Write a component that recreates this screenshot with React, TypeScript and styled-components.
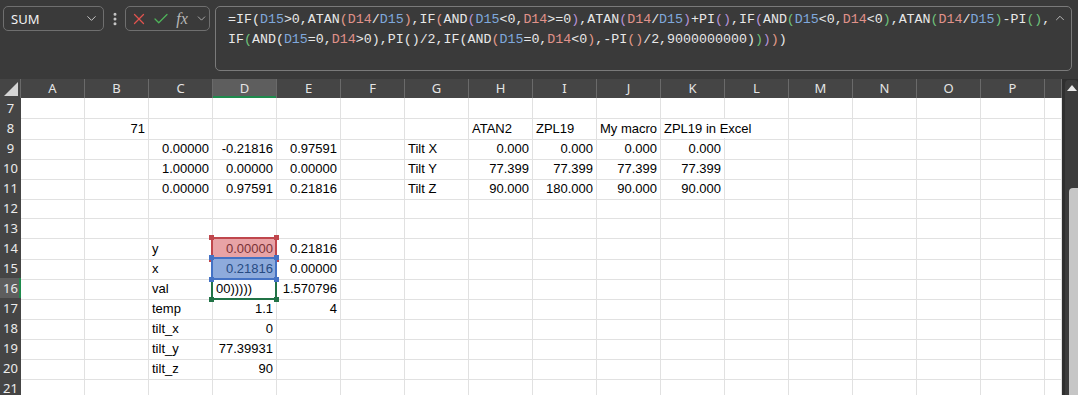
import styled, { createGlobalStyle } from 'styled-components'
import { ChevronDown, ChevronUp, EllipsisVertical, X, Check } from 'lucide-react'
import type { ReactNode } from 'react'

const GlobalStyle = createGlobalStyle`
  html, body {
    margin: 0;
    padding: 0;
    background: #3a3a3a;
    overflow: hidden;
  }
  #root {
    width: 1078px;
    height: 395px;
    overflow: hidden;
  }
`

const Toolbar = styled.div`
  display: flex;
  align-items: flex-start;
  height: 79px;
  box-sizing: border-box;
  padding: 6px 6px 0 3px;
  background: #3a3a3a;
`

const NameBox = styled.div`
  width: 101px;
  height: 25px;
  box-sizing: border-box;
  border: 1px solid #6f6f6f;
  border-radius: 5px;
  display: flex;
  align-items: center;
  justify-content: space-between;
  padding: 0 4px 0 7px;
  color: #f2f2f2;
  font: 13px 'Noto Sans', 'Open Sans', sans-serif;
`

const Dots = styled.div`
  width: 21px;
  height: 25px;
  display: flex;
  align-items: center;
  justify-content: center;
  color: #c8c8c8;
`

const FxBox = styled.div`
  width: 85px;
  height: 25px;
  box-sizing: border-box;
  border: 1px solid #6f6f6f;
  border-radius: 5px;
  display: grid;
  grid-template-columns: 17px 17px 16px 12px;
  column-gap: 5px;
  align-items: center;
  padding-left: 4px;
`

const FxLabel = styled.span`
  font: italic 16px 'Liberation Serif', serif;
  color: #b8b8b8;
  text-align: center;
  line-height: 22px;
`

const FormulaBox = styled.div`
  flex: 1;
  height: 65px;
  margin-left: 5px;
  box-sizing: border-box;
  border: 1px solid #7a7a7a;
  border-radius: 5px;
  display: flex;
  justify-content: space-between;
  padding: 3px 4px 0 12px;
  font: 13.3px 'Liberation Mono', monospace;
  line-height: 20px;
  color: #e8e8e8;
`

const FormulaText = styled.div`
  white-space: pre;
`

const Collapse = styled.div`
  color: #c8c8c8;
  padding-top: 1px;
`

const Sheet = styled.div`
  display: flex;
  height: 316px;
`

const Grid = styled.div`
  width: 1062px;
  background: #ffffff;
  overflow: hidden;
  font: 13px 'Liberation Sans', Arial, sans-serif;
`

const Row = styled.div<{ $h: number }>`
  display: grid;
  grid-template-columns: 21px repeat(16, 64px) 17px;
  height: ${p => p.$h}px;
`

const Corner = styled.div`
  background: #454545;
  border-right: 1px solid #6a6a6a;
  display: flex;
  align-items: flex-end;
  justify-content: flex-end;
  padding: 0 2px 2px 0;
`

const ColHead = styled.div<{ $active?: boolean }>`
  background: ${p => (p.$active ? '#5e5e5e' : '#454545')};
  border-right: 1px solid #6a6a6a;
  box-shadow: ${p => (p.$active ? 'inset 0 -2px 0 #1e8a4c' : 'none')};
  color: #e4e4e4;
  font: 13px 'Noto Sans', 'Open Sans', sans-serif;
  line-height: 19px;
  text-align: center;
`

const RowHead = styled.div<{ $active?: boolean }>`
  background: ${p => (p.$active ? '#5e5e5e' : '#454545')};
  border-bottom: 1px solid #6c6c6c;
  box-shadow: ${p => (p.$active ? 'inset -2px 0 0 #1e8a4c' : 'none')};
  box-sizing: border-box;
  color: #ececec;
  font: 13px 'Noto Sans', 'Open Sans', sans-serif;
  line-height: 20px;
  text-align: center;
`

type Frame = 'red' | 'blue' | 'green'

const frameColors: Record<Frame, { line: string; fill: string; text: string; z: number }> = {
  red: { line: '#c0474d', fill: '#e8a3a6', text: '#7a3236', z: 3 },
  blue: { line: '#4472c4', fill: '#8eabdc', text: '#264a82', z: 3 },
  green: { line: '#217346', fill: 'transparent', text: '#000000', z: 2 },
}

const Cell = styled.div<{ $num?: boolean; $open?: boolean; $frame?: Frame }>`
  position: relative;
  box-sizing: border-box;
  border-right: 1px solid ${p => (p.$open ? 'transparent' : '#e1e1e1')};
  border-bottom: 1px solid #e1e1e1;
  padding: 0 3px;
  line-height: 21px;
  white-space: nowrap;
  text-align: ${p => (p.$num ? 'right' : 'left')};
  color: ${p => (p.$frame ? frameColors[p.$frame].text : '#000000')};
  background: ${p => (p.$frame ? frameColors[p.$frame].fill : 'transparent')};
  z-index: ${p => (p.$frame ? frameColors[p.$frame].z : 'auto')};

  &::after {
    content: '';
    display: ${p => (p.$frame ? 'block' : 'none')};
    position: absolute;
    inset: -1px -1px -1px -2px;
    border: 2px solid ${p => (p.$frame ? frameColors[p.$frame].line : 'transparent')};
    pointer-events: none;
  }
`

const Handle = styled.span<{ $color: string; $top?: boolean; $left?: boolean }>`
  position: absolute;
  width: 5px;
  height: 5px;
  background: ${p => p.$color};
  ${p => (p.$top ? 'top: -3px;' : 'bottom: -3px;')}
  ${p => (p.$left ? 'left: -4px;' : 'right: -3px;')}
  z-index: 1;
`

const ScrollCol = styled.div`
  width: 16px;
  background: #2f2f2f;
  display: flex;
  flex-direction: column;
  padding: 1px 0 0 3px;
  box-sizing: border-box;
`

const Track = styled.div`
  flex: 1;
  background: #3c3c3c;
  border-radius: 4px 4px 0 0;
  display: flex;
  flex-direction: column;
  align-items: flex-end;
`

const ArrowUp = styled.div`
  align-self: center;
  margin-top: 5px;
  width: 0;
  height: 0;
  border-left: 5px solid transparent;
  border-right: 5px solid transparent;
  border-bottom: 6px solid #e6e6e6;
`

const Thumb = styled.div`
  width: 9px;
  margin-top: 97px;
  flex: 1;
  background: #c6c6c6;
  border-radius: 4px 0 0 0;
`

const columns = ['A', 'B', 'C', 'D', 'E', 'F', 'G', 'H', 'I', 'J', 'K', 'L', 'M', 'N', 'O', 'P']

const data: Record<number, Record<string, string>> = {
  8: { B: '71', H: 'ATAN2', I: 'ZPL19', J: 'My macro', K: 'ZPL19 in Excel' },
  9: { C: '0.00000', D: '-0.21816', E: '0.97591', G: 'Tilt X', H: '0.000', I: '0.000', J: '0.000', K: '0.000' },
  10: { C: '1.00000', D: '0.00000', E: '0.00000', G: 'Tilt Y', H: '77.399', I: '77.399', J: '77.399', K: '77.399' },
  11: { C: '0.00000', D: '0.97591', E: '0.21816', G: 'Tilt Z', H: '90.000', I: '180.000', J: '90.000', K: '90.000' },
  14: { C: 'y', D: '0.00000', E: '0.21816' },
  15: { C: 'x', D: '0.21816', E: '0.00000' },
  16: { C: 'val', D: '00)))))', E: '1.570796' },
  17: { C: 'temp', D: '1.1', E: '4' },
  18: { C: 'tilt_x', D: '0' },
  19: { C: 'tilt_y', D: '77.39931' },
  20: { C: 'tilt_z', D: '90' },
}

const frames: Record<string, Frame> = { D14: 'red', D15: 'blue', D16: 'green' }

const rows = Array.from({ length: 15 }, (_, i) => i + 7)

const isNumber = (v: string) => /^-?[\d.]+$/.test(v)

// formula colouring: refs get their range colour, parens get a colour by depth
const parenColors = ['#e8e8e8', '#e39a8a', '#b894d8', '#6fc27a']
const refColors: Record<string, string> = { D15: '#7fa8dc', D14: '#e0928a' }

function colorize(text: string, depth: { n: number }) {
  const out: ReactNode[] = []
  const tokens = text.match(/D1[45]|\(|\)|[^()D]+|D/g) || []
  tokens.forEach((t, i) => {
    if (t === '(') {
      depth.n += 1
      out.push(<span key={i} style={{ color: parenColors[(depth.n - 1) % 4] }}>(</span>)
    } else if (t === ')') {
      out.push(<span key={i} style={{ color: parenColors[(depth.n - 1) % 4] }}>)</span>)
      depth.n -= 1
    } else if (refColors[t]) {
      out.push(<span key={i} style={{ color: refColors[t] }}>{t}</span>)
    } else {
      out.push(t)
    }
  })
  return out
}

const depth = { n: 0 }
const line1 = colorize('=IF(D15>0,ATAN(D14/D15),IF(AND(D15<0,D14>=0),ATAN(D14/D15)+PI(),IF(AND(D15<0,D14<0),ATAN(D14/D15)-PI(),', depth)
const line2 = colorize('IF(AND(D15=0,D14>0),PI()/2,IF(AND(D15=0,D14<0),-PI()/2,9000000000)))))', depth)

export default function App() {
  return (
    <>
      <GlobalStyle />
      <Toolbar>
        <NameBox>
          <span>SUM</span>
          <ChevronDown size={15} strokeWidth={1.5} color='#cfcfcf' />
        </NameBox>
        <Dots>
          <EllipsisVertical size={16} strokeWidth={2.5} />
        </Dots>
        <FxBox>
          <X size={18} strokeWidth={1.7} color='#e0534e' />
          <Check size={18} strokeWidth={1.7} color='#4fb35a' />
          <FxLabel>fx</FxLabel>
          <ChevronDown size={13} strokeWidth={1.5} color='#c0c0c0' />
        </FxBox>
        <FormulaBox>
          <FormulaText>
            <div>{line1}</div>
            <div>{line2}</div>
          </FormulaText>
          <Collapse>
            <ChevronUp size={14} strokeWidth={1.5} />
          </Collapse>
        </FormulaBox>
      </Toolbar>
      <Sheet>
        <Grid>
          <Row $h={19}>
            <Corner>
              <svg width='14' height='14' viewBox='0 0 14 14'>
                <polygon points='14,0 14,14 0,14' fill='#d4d4d4' />
              </svg>
            </Corner>
            {columns.map(c => (
              <ColHead key={c} $active={c === 'D'}>{c}</ColHead>
            ))}
            <ColHead />
          </Row>
          {rows.map(r => (
            <Row key={r} $h={20}>
              <RowHead $active={r === 16}>{r}</RowHead>
              {columns.map(c => {
                const v = data[r]?.[c] ?? ''
                const frame = frames[c + r]
                const overflowing = r === 8 && c === 'K'
                return (
                  <Cell key={c} $num={isNumber(v)} $open={overflowing} $frame={frame}>
                    {v}
                    {frame && (
                      <>
                        {frame !== 'green' && <Handle $color={frameColors[frame].line} $top $left />}
                        {frame !== 'green' && <Handle $color={frameColors[frame].line} $top />}
                        <Handle $color={frameColors[frame].line} $left />
                        <Handle $color={frameColors[frame].line} />
                      </>
                    )}
                  </Cell>
                )
              })}
              <Cell />
            </Row>
          ))}
        </Grid>
        <ScrollCol>
          <Track>
            <ArrowUp />
            <Thumb />
          </Track>
        </ScrollCol>
      </Sheet>
    </>
  )
}
